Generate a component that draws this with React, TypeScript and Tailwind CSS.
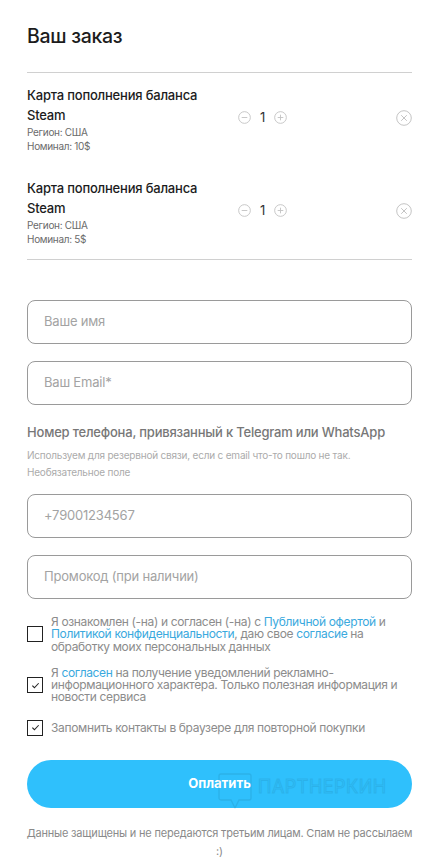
import React from "react";

interface CartItem {
  id: number;
  title: string;
  region: string;
  nominal: string;
  qty: number;
}

const items: CartItem[] = [
  { id: 1, title: "Карта пополнения баланса Steam", region: "США", nominal: "10$", qty: 1 },
  { id: 2, title: "Карта пополнения баланса Steam", region: "США", nominal: "5$", qty: 1 },
];

const CircleMinus = () => (
  <svg width="13" height="13" viewBox="0 0 14 14" fill="none" stroke="#c4c4c4" strokeWidth="1">
    <circle cx="7" cy="7" r="6.3" />
    <path d="M4 7h6" />
  </svg>
);

const CirclePlus = () => (
  <svg width="13" height="13" viewBox="0 0 14 14" fill="none" stroke="#c4c4c4" strokeWidth="1">
    <circle cx="7" cy="7" r="6.3" />
    <path d="M4 7h6M7 4v6" />
  </svg>
);

const CircleClose = () => (
  <svg width="16" height="16" viewBox="0 0 16 16" fill="none" stroke="#c4c4c4" strokeWidth="1">
    <circle cx="8" cy="8" r="7.3" />
    <path d="M5.2 5.2l5.6 5.6M10.8 5.2l-5.6 5.6" />
  </svg>
);

const Check = ({ checked }: { checked: boolean }) => (
  <div className="w-[16px] h-[16px] shrink-0 border border-[#222] flex items-center justify-center">
    {checked && (
      <svg width="9" height="9" viewBox="0 0 10 10" fill="none" stroke="#222" strokeWidth="1.2">
        <path d="M1.5 5.2l2.3 2.3L8.5 2.5" />
      </svg>
    )}
  </div>
);

const Field = ({ placeholder }: { placeholder: string }) => (
  <div className="h-[44px] rounded-[8px] border border-[#9a9a9a] flex items-center px-[16px] text-[13px] text-[#a3a3a3] tracking-[-0.2px]">
    {placeholder}
  </div>
);

const Link = ({ children }: { children: React.ReactNode }) => (
  <span className="text-[#3aa9de]">{children}</span>
);

export default function App() {
  return (
    <div
      className="w-[439px] min-h-[859px] bg-white px-[27px] pt-[24px] text-[#1c1c1c]"
      style={{ fontFamily: "Inter, 'Noto Sans', sans-serif" }}
    >
      <h1 className="text-[19.5px] font-medium leading-[24px] tracking-[-0.3px]">Ваш заказ</h1>

      <div className="mt-[24px] border-t border-[#d0d0d0]" />

      <div className="flex flex-col gap-[25px] pt-[12px] pb-[13px]">
        {items.map((it) => (
          <div key={it.id} className="flex items-start">
            <div className="w-[200px]">
              <div className="text-[13px] font-medium leading-[20px] tracking-[-0.2px]">
                {it.title}
              </div>
              <div className="text-[10px] leading-[14px] text-[#6b6b6b] tracking-[-0.3px]">
                Регион: {it.region}
              </div>
              <div className="text-[10px] leading-[14px] text-[#6b6b6b] tracking-[-0.3px]">
                Номинал: {it.nominal}
              </div>
            </div>
            <div className="ml-[11px] mt-[26px] flex items-center gap-[9px]">
              <CircleMinus />
              <span className="text-[13px] leading-[13px] text-[#333]">{it.qty}</span>
              <CirclePlus />
            </div>
            <div className="ml-auto mt-[25px]">
              <CircleClose />
            </div>
          </div>
        ))}
      </div>

      <div className="border-t border-[#d0d0d0]" />

      <div className="mt-[40px] flex flex-col gap-[17px]">
        <Field placeholder="Ваше имя" />
        <Field placeholder="Ваш Email*" />
      </div>

      <div className="mt-[17px] text-[13px] font-medium text-[#777] leading-[20px] tracking-[-0.2px]">
        Номер телефона, привязанный к Telegram или WhatsApp
      </div>
      <div className="mt-[5px] text-[10px] leading-[17px] text-[#ababab] tracking-[-0.2px]">
        Используем для резервной связи, если с email что-то пошло не так.
        <br />
        Необязательное поле
      </div>

      <div className="mt-[13px] flex flex-col gap-[17px]">
        <Field placeholder="+79001234567" />
        <Field placeholder="Промокод (при наличии)" />
      </div>

      <div className="mt-[17px] flex flex-col text-[12px] leading-[12.3px] text-[#8c8c8c] tracking-[-0.35px]">
        <div className="flex items-center gap-[8px]">
          <Check checked={false} />
          <div>
            Я ознакомлен (-на) и согласен (-на) с <Link>Публичной офертой</Link> и{" "}
            <Link>Политикой конфиденциальности</Link>, даю свое <Link>согласие</Link> на обработку
            моих персональных данных
          </div>
        </div>
        <div className="mt-[14px] flex items-center gap-[8px]">
          <Check checked />
          <div>
            Я <Link>согласен</Link> на получение уведомлений рекламно-информационного характера.
            Только полезная информация и новости сервиса
          </div>
        </div>
        <div className="mt-[16px] flex items-center gap-[8px]">
          <Check checked />
          <div>Запомнить контакты в браузере для повторной покупки</div>
        </div>
      </div>

      <div className="relative mt-[24px]">
        <button className="w-full h-[48px] rounded-full bg-[#2fc0fc] text-white text-[13px] font-bold">
          Оплатить
        </button>
        <div className="pointer-events-none absolute left-[191px] top-[13px] flex items-start gap-[6px] opacity-[0.07]">
          <svg width="34" height="36" viewBox="0 0 34 36" fill="none" stroke="#000" strokeWidth="1.3">
            <path d="M3 1h28a2 2 0 0 1 2 2v22a2 2 0 0 1-2 2H21l-4 8-4-8H3a2 2 0 0 1-2-2V3a2 2 0 0 1 2-2z" />
          </svg>
          <span
            className="mt-[4px] text-[18px] leading-[20px] tracking-[0.5px] text-transparent"
            style={{ WebkitTextStroke: "1px #000" }}
          >
            ПАРТНЕРКИН
          </span>
        </div>
      </div>

      <div className="mt-[16px] -mx-[4px] text-center text-[11px] leading-[18px] text-[#8a8a8a] tracking-[-0.2px] whitespace-nowrap">
        Данные защищены и не передаются третьим лицам. Спам не рассылаем
        <br />
        :)
      </div>
    </div>
  );
}
